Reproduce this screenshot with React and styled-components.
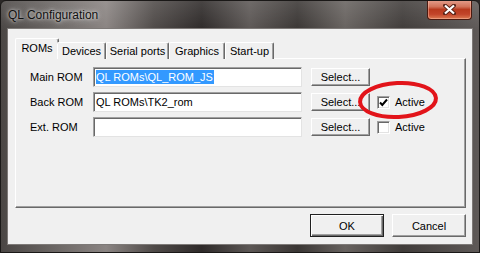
import React from 'react'
import styled, { createGlobalStyle } from 'styled-components'

const GlobalStyle = createGlobalStyle`
  html, body {
    margin: 0;
    padding: 0;
    background: #2b2827;
  }
  body {
    font-family: 'Liberation Sans', Arial, sans-serif;
  }
`

const Window = styled.div`
  width: 480px;
  height: 253px;
  box-sizing: border-box;
  display: flex;
  flex-direction: column;
  border: 1px solid #1a1817;
  border-radius: 6px 6px 0 0;
  overflow: hidden;
  background:
    linear-gradient(180deg, rgba(255, 255, 255, 0.12) 0%, rgba(255, 255, 255, 0) 30px),
    linear-gradient(
      90deg,
      #4a4644 0%,
      #6d6866 12%,
      #8a8482 22%,
      #4f4a48 32%,
      #2e2a29 42%,
      #5c5755 52%,
      #3a3634 62%,
      #67625f 72%,
      #403c3a 84%,
      #5e5957 100%
    );
`

const TitleBar = styled.div`
  height: 27px;
  flex-shrink: 0;
  display: flex;
  justify-content: space-between;
  align-items: flex-start;
  padding: 0 7px;
`

const Title = styled.span`
  margin-top: 7px;
  font-size: 12px;
  color: #111;
  text-shadow: 0 0 6px rgba(240, 240, 240, 0.9), 0 0 3px rgba(255, 255, 255, 0.7);
`

const CloseButton = styled.div`
  width: 45px;
  height: 20px;
  margin-top: -1px;
  box-sizing: border-box;
  display: flex;
  align-items: center;
  justify-content: center;
  border: 1px solid #4a1a10;
  border-top: none;
  border-radius: 0 0 4px 4px;
  background: linear-gradient(
    180deg,
    #e6a08e 0%,
    #d2735a 35%,
    #b93a1e 50%,
    #c2452a 75%,
    #dc7a52 100%
  );
  box-shadow: inset 0 0 0 1px rgba(255, 200, 180, 0.45);
`

const Client = styled.div`
  flex: 1;
  margin: 0 6px 7px 6px;
  display: flex;
  flex-direction: column;
  padding: 9px 6px 7px 7px;
  background: #f0f0f0;
  border: 1px solid #7d7977;
  box-sizing: border-box;
`

const TabRow = styled.div`
  display: flex;
  align-items: flex-end;
  height: 21px;
  margin-bottom: -1px;
  position: relative;
  z-index: 1;
`

const Tab = styled.div`
  box-sizing: border-box;
  width: ${(p) => p.w}px;
  height: ${(p) => (p.active ? 21 : 17)}px;
  margin: 0 ${(p) => (p.active ? -2 : 0)}px;
  display: flex;
  align-items: ${(p) => (p.active ? 'flex-start' : 'center')};
  justify-content: center;
  padding-top: ${(p) => (p.active ? 3 : 0)}px;
  font-size: 11px;
  color: #000;
  background: #f0f0f0;
  border-top: 1px solid #fff;
  border-left: 1px solid #fff;
  border-right: 1px solid #696969;
  border-radius: 2px 2px 0 0;
  box-shadow: inset -1px 0 0 #a0a0a0;
  &:first-child {
    margin-left: 0;
  }
`

const Panel = styled.div`
  flex: 1;
  position: relative;
  display: flex;
  flex-direction: column;
  gap: 5px;
  padding: 8px 14px 0 14px;
  background: #f0f0f0;
  border: 1px solid;
  border-color: #fff #696969 #696969 #fff;
  box-shadow: inset -1px -1px 0 #a0a0a0;
`

const Row = styled.div`
  display: flex;
  align-items: center;
  height: 20px;
`

const Label = styled.span`
  width: 63px;
  font-size: 11px;
  color: #000;
`

const Field = styled.div`
  width: 209px;
  height: 20px;
  box-sizing: border-box;
  display: flex;
  align-items: center;
  padding-left: 2px;
  background: #fff;
  border: 1px solid;
  border-color: #a0a0a0 #e3e3e3 #e3e3e3 #a0a0a0;
  box-shadow: inset 1px 1px 0 #696969;
  font-size: 11px;
  color: #000;
  white-space: nowrap;
`

const Selected = styled.span`
  background: #3399ff;
  color: #fff;
  line-height: 14px;
  padding-right: 1px;
`

const Button = styled.div`
  width: ${(p) => p.w}px;
  height: ${(p) => p.h}px;
  margin-left: ${(p) => p.ml || 0}px;
  box-sizing: border-box;
  display: flex;
  align-items: center;
  justify-content: center;
  font-size: 11px;
  color: #000;
  background: #f0f0f0;
  border: 1px solid;
  border-color: ${(p) => (p.def ? '#202020' : '#fff #696969 #696969 #fff')};
  box-shadow: ${(p) =>
    p.def
      ? 'inset 1px 1px 0 #fff, inset -1px -1px 0 #696969, inset -2px -2px 0 #a0a0a0'
      : 'inset -1px -1px 0 #a0a0a0'};
`

const CheckWrap = styled.label`
  display: flex;
  align-items: center;
  gap: 5px;
  margin-left: 7px;
  font-size: 11px;
  color: #000;
`

const Box = styled.span`
  width: 13px;
  height: 13px;
  box-sizing: border-box;
  display: flex;
  align-items: center;
  justify-content: center;
  background: #fff;
  border: 1px solid;
  border-color: #a0a0a0 #fff #fff #a0a0a0;
  box-shadow: inset 1px 1px 0 #696969, inset -1px -1px 0 #e3e3e3;
`

const Mark = styled.svg`
  position: absolute;
  left: 341px;
  top: 21px;
  pointer-events: none;
`

const Footer = styled.div`
  display: flex;
  justify-content: flex-end;
  gap: 8px;
  margin-top: 6px;
`

const Check = ({ checked }) => (
  <CheckWrap>
    <Box>
      {checked && (
        <svg width="9" height="9" viewBox="0 0 9 9">
          <path d="M1 4.5 L3.3 7 L8 1.5" fill="none" stroke="#000" strokeWidth="2" />
        </svg>
      )}
    </Box>
    Active
  </CheckWrap>
)

const tabs = [
  { name: 'ROMs', w: 44, active: true },
  { name: 'Devices', w: 49 },
  { name: 'Serial ports', w: 63 },
  { name: 'Graphics', w: 56 },
  { name: 'Start-up', w: 49 },
]

export default function App() {
  return (
    <>
      <GlobalStyle />
      <Window>
        <TitleBar>
          <Title>QL Configuration</Title>
          <CloseButton>
            <svg width="13" height="11" viewBox="0 0 13 11">
              <path
                d="M2 1.5 L11 9.5 M11 1.5 L2 9.5"
                stroke="#5a2418"
                strokeWidth="4"
                strokeLinecap="round"
              />
              <path d="M2 1.5 L11 9.5 M11 1.5 L2 9.5" stroke="#fff" strokeWidth="2.2" />
            </svg>
          </CloseButton>
        </TitleBar>
        <Client>
          <TabRow>
            {tabs.map((t) => (
              <Tab key={t.name} w={t.w} active={t.active}>
                {t.name}
              </Tab>
            ))}
          </TabRow>
          <Panel>
            <Row>
              <Label>Main ROM</Label>
              <Field>
                <Selected>QL ROMs\QL_ROM_JS</Selected>
              </Field>
              <Button w={59} h={18} ml={9}>
                Select...
              </Button>
            </Row>
            <Row>
              <Label>Back ROM</Label>
              <Field>QL ROMs\TK2_rom</Field>
              <Button w={59} h={18} ml={9}>
                Select...
              </Button>
              <Check checked />
            </Row>
            <Row>
              <Label>Ext. ROM</Label>
              <Field />
              <Button w={59} h={18} ml={9}>
                Select...
              </Button>
              <Check />
            </Row>
            <Mark width="82" height="40" viewBox="0 0 82 40">
              <ellipse
                cx="41"
                cy="20"
                rx="38"
                ry="17"
                fill="none"
                stroke="#e2141a"
                strokeWidth="4"
                transform="rotate(-3 41 20)"
              />
            </Mark>
          </Panel>
          <Footer>
            <Button w={74} h={23} def>
              OK
            </Button>
            <Button w={74} h={23}>
              Cancel
            </Button>
          </Footer>
        </Client>
      </Window>
    </>
  )
}
